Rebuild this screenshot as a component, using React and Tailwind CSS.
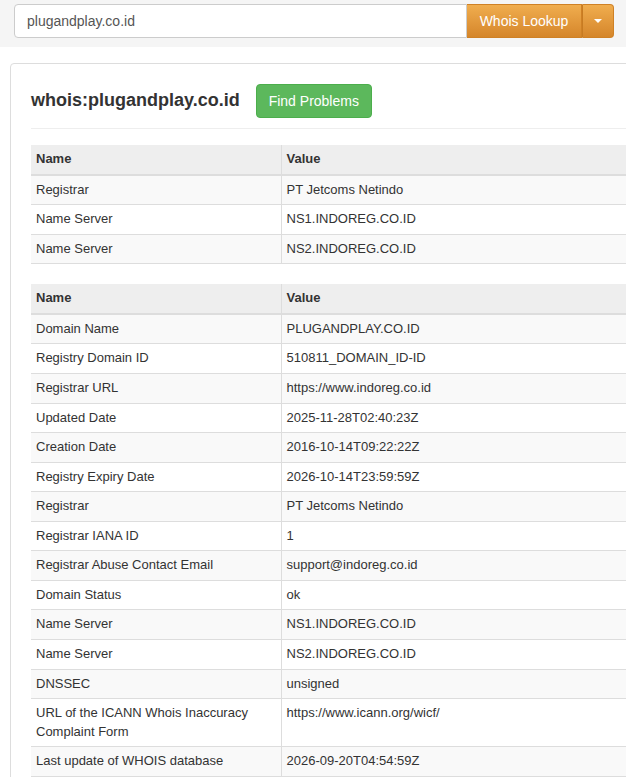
import React from 'react'

const summary = [
  ['Registrar', 'PT Jetcoms Netindo'],
  ['Name Server', 'NS1.INDOREG.CO.ID'],
  ['Name Server', 'NS2.INDOREG.CO.ID'],
]

const details = [
  ['Domain Name', 'PLUGANDPLAY.CO.ID'],
  ['Registry Domain ID', '510811_DOMAIN_ID-ID'],
  ['Registrar URL', 'https://www.indoreg.co.id'],
  ['Updated Date', '2025-11-28T02:40:23Z'],
  ['Creation Date', '2016-10-14T09:22:22Z'],
  ['Registry Expiry Date', '2026-10-14T23:59:59Z'],
  ['Registrar', 'PT Jetcoms Netindo'],
  ['Registrar IANA ID', '1'],
  ['Registrar Abuse Contact Email', 'support@indoreg.co.id'],
  ['Domain Status', 'ok'],
  ['Name Server', 'NS1.INDOREG.CO.ID'],
  ['Name Server', 'NS2.INDOREG.CO.ID'],
  ['DNSSEC', 'unsigned'],
  ['URL of the ICANN Whois Inaccuracy Complaint Form', 'https://www.icann.org/wicf/'],
  ['Last update of WHOIS database', '2026-09-20T04:54:59Z'],
]

function WhoisTable({ rows }){
  return (
    <table className="w-full border-collapse mb-5 text-[13px] leading-[1.42857] text-[#333]">
      <thead>
        <tr className="bg-[#eee]">
          <th className="w-[250px] text-left font-bold px-[5px] py-[5px] border-b-2 border-[#ddd] border-r border-r-[#ddd]">Name</th>
          <th className="text-left font-bold px-[5px] py-[5px] border-b-2 border-[#ddd]">Value</th>
        </tr>
      </thead>
      <tbody>
        {rows.map((r, i) => (
          <tr key={i} className={i % 2 === 0 ? 'bg-[#f9f9f9]' : 'bg-white'}>
            <td className="align-top px-[5px] py-[5px] border-b border-[#ddd] border-r border-r-[#ddd] pr-8">{r[0]}</td>
            <td className="align-top px-[5px] py-[5px] border-b border-[#ddd]">{r[1]}</td>
          </tr>
        ))}
      </tbody>
    </table>
  )
}

export default function App(){
  return (
    <div className="w-[626px] h-[777px] overflow-hidden bg-white" style={{ fontFamily: '"Liberation Sans", Arial, sans-serif' }}>
      <div className="bg-[#f5f5f5] h-[47px] pt-1 pl-[14px] pr-[12px]">
        <div className="flex h-[34px]">
          <input
            className="flex-1 min-w-0 h-[34px] px-3 text-sm text-[#555] bg-white border border-[#ccc] rounded-l-[4px] outline-none"
            defaultValue="plugandplay.co.id"
            style={{ fontFamily: '"Liberation Sans", Arial, sans-serif' }}
          />
          <button className="w-[115px] h-[34px] text-sm text-white bg-gradient-to-b from-[#f0ad4e] to-[#d5862a] border border-[#cf8125] border-l-0">Whois Lookup</button>
          <button className="w-[32px] h-[34px] flex items-center justify-center bg-gradient-to-b from-[#f0ad4e] to-[#d5862a] border border-[#cf8125] border-l-[#c77b22] rounded-r-[4px]">
            <span className="block w-0 h-0 border-x-4 border-x-transparent border-t-4 border-t-white"></span>
          </button>
        </div>
      </div>
      <div className="mt-4 ml-[10px] w-[760px] border border-[#ddd] rounded-[4px] px-5 pt-5 pb-10">
        <div className="flex items-center">
          <h3 className="text-[18px] font-bold text-[#333] leading-[1.1]">whois:plugandplay.co.id</h3>
          <button className="ml-[16px] h-[34px] px-3 text-sm text-white bg-[#5cb85c] border border-[#4cae4c] rounded-[4px]">Find Problems</button>
        </div>
        <hr className="mt-[10px] mb-4 border-0 border-t border-[#eee]" />
        <WhoisTable rows={summary} />
        <WhoisTable rows={details} />
      </div>
    </div>
  )
}
